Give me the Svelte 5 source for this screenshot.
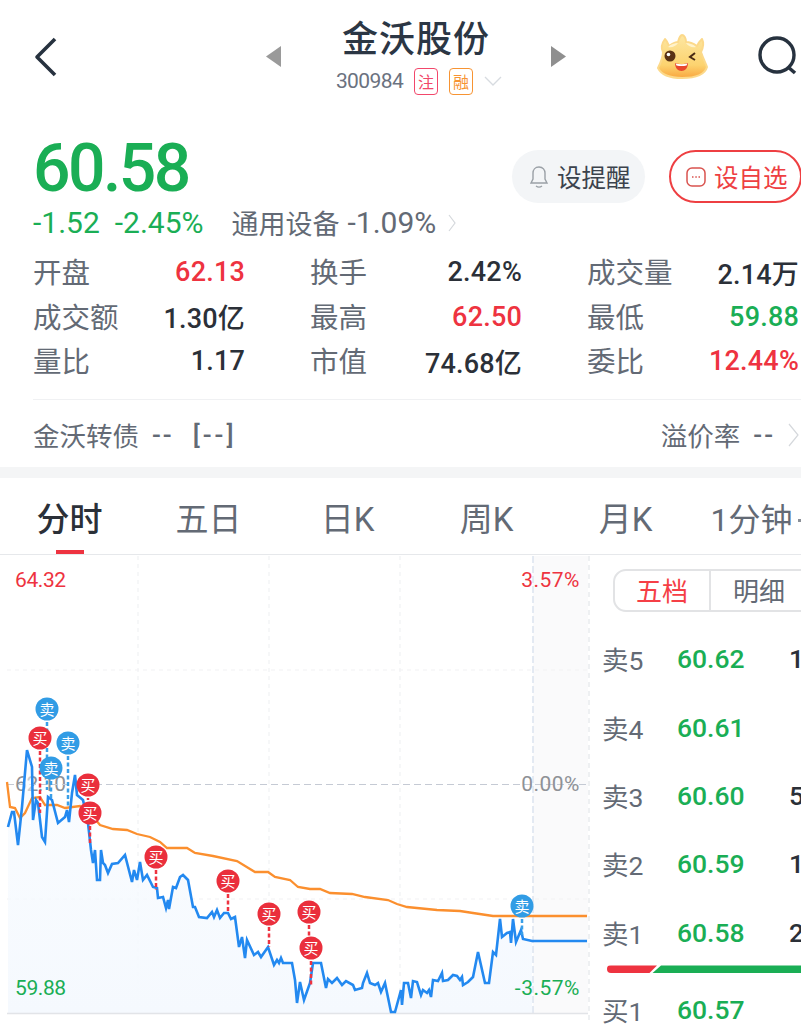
<script>
  const fmt = (p) => p.map((q) => q.join(',')).join(' ');
  const blue = [[8,827],[12,812],[14,812],[18,845],[22,807],[27,750],[32,767],[33,820],[36,800],[38,803],[42,837],[45,842],[48,797],[52,800],[58,823],[65,817],[67,810],[69,822],[72,793],[75,775],[77,795],[83,800],[88,823],[91,850],[93,863],[95,850],[97,880],[100,880],[101,850],[103,863],[105,865],[108,873],[112,864],[118,863],[125,855],[132,882],[134,870],[137,880],[140,862],[143,880],[147,875],[153,887],[157,888],[158,898],[163,897],[166,908],[168,900],[169,909],[173,887],[176,888],[180,877],[183,875],[188,880],[193,907],[195,907],[199,917],[207,918],[212,912],[214,917],[217,910],[220,918],[224,913],[228,913],[231,919],[235,917],[239,947],[242,937],[245,958],[247,940],[254,955],[258,952],[261,957],[268,947],[274,965],[277,960],[279,963],[281,958],[283,963],[292,963],[295,980],[297,1003],[300,982],[304,1000],[310,983],[313,963],[321,963],[326,988],[328,979],[332,983],[337,978],[342,985],[346,981],[353,985],[355,990],[362,988],[363,983],[367,973],[370,983],[375,985],[378,983],[381,992],[385,983],[391,1012],[395,1012],[401,990],[402,1005],[404,983],[408,983],[411,998],[413,981],[417,982],[421,995],[423,990],[427,993],[429,990],[431,997],[433,980],[438,981],[442,973],[443,981],[448,980],[453,975],[457,976],[460,980],[462,977],[463,985],[468,982],[473,977],[478,952],[485,983],[489,983],[493,952],[496,955],[500,919],[502,937],[507,933],[510,932],[511,943],[513,919],[516,942],[521,930],[523,939],[532,941],[587,941]];
  const orange = [[7,782],[10,807],[15,808],[20,818],[25,813],[32,798],[40,797],[45,805],[57,805],[65,808],[80,806],[90,813],[100,825],[113,829],[127,830],[137,834],[150,837],[160,842],[167,848],[187,848],[195,853],[213,856],[237,861],[255,872],[268,872],[275,877],[290,880],[298,887],[310,889],[320,889],[330,893],[352,894],[365,897],[388,900],[397,904],[407,907],[437,910],[460,911],[473,913],[493,916],[587,916]];
  const area = [...blue.filter((q) => q[0] <= 532), [532,1013], [8,1013]];
  const marks = [
    { x: 47, y: 709, k: '卖', to: 790 },
    { x: 68, y: 743, k: '卖', to: 806 },
    { x: 40, y: 738, k: '买', to: 813 },
    { x: 51, y: 768, k: '卖', to: 800 },
    { x: 88, y: 785, k: '买', to: 800 },
    { x: 90, y: 813, k: '买', to: 845 },
    { x: 156, y: 857, k: '买', to: 890 },
    { x: 228, y: 881, k: '买', to: 913 },
    { x: 269, y: 914, k: '买', to: 947 },
    { x: 309, y: 912, k: '买', to: 940 },
    { x: 311, y: 948, k: '买', to: 985 },
    { x: 522, y: 906, k: '卖', to: 935 },
  ];
  const stats = [
    [['开盘','62.13','red'],['换手','2.42%',''],['成交量','2.14万','']],
    [['成交额','1.30亿',''],['最高','62.50','red'],['最低','59.88','green']],
    [['量比','1.17',''],['市值','74.68亿',''],['委比','12.44%','red']],
  ];
  const tabs = ['分时','五日','日K','周K','月K','1分钟'];
  const book = [['卖5','60.62','1'],['卖4','60.61',''],['卖3','60.60','5'],['卖2','60.59','1'],['卖1','60.58','2']];
</script>

<div class="page">
  <header class="top">
    <svg class="back" viewBox="0 0 24 40" width="24" height="40"><path d="M22 2 4 20l18 18" fill="none" stroke="#27323f" stroke-width="3.6" stroke-linejoin="round"/></svg>
    <svg class="arrow arrow-l" viewBox="0 0 10 22" width="15" height="21" preserveAspectRatio="none"><path d="M10 0v22L0 11z" fill="#9a9a9a"/></svg>
    <div class="title">
      <div class="name">金沃股份</div>
      <div class="code"><span>300984</span><b class="tag pink">注</b><b class="tag orange">融</b>
        <svg viewBox="0 0 18 10" width="18" height="10"><path d="M1 1l8 8 8-8" fill="none" stroke="#d7dbe0" stroke-width="1.3"/></svg>
      </div>
    </div>
    <svg class="arrow" viewBox="0 0 10 22" width="15" height="21" preserveAspectRatio="none"><path d="M0 0v22L10 11z" fill="#8f8f8f"/></svg>
    <svg class="mascot" viewBox="0 0 54 48" width="54" height="48">
      <defs>
        <linearGradient id="skin" x1="0" y1="0" x2="0" y2="1"><stop offset="0" stop-color="#fde7a2"/><stop offset="0.7" stop-color="#fcd36f"/><stop offset="1" stop-color="#f9a63f"/></linearGradient>
      </defs>
      <path d="M9 7c2 2 3 5 4 7 3-2 7-4 9-4 1-4 3-7 4-7 2 0 4 3 4 7 4 0 8 2 11 4 1-3 3-5 5-7 2 4 1 9-1 13 2 6 4 10 6 15-2 7-10 11-25 11-14 0-21-4-24-10 3-6 5-10 5-16-2-4-1-9 2-13z" fill="url(#skin)" stroke="#fcd98a" stroke-width="2" stroke-linejoin="round"/>
      <path d="M12 15c3-3 7-4 10-4-2 3-6 5-10 4zM40 15c-3-3-7-4-10-4 2 3 6 5 10 4z" fill="#fff3cc"/>
      <circle cx="14" cy="24" r="5.500" fill="#5a3214"/><circle cx="12.500" cy="22.500" r="1.800" fill="#fff"/>
      <path d="M39 21l-5 4 5 3" fill="none" stroke="#4a2a14" stroke-width="2"/>
      <path d="M19 31c4 1.500 9 1.500 13 0 0 5-3 8-6.500 8S19 36 19 31z" fill="#e8482e"/>
      <path d="M19.500 31.500c4 1 8 1 12 0l-1 2c-3 .7-7 .7-10 0z" fill="#fff"/>
    </svg>
    <svg class="search" viewBox="0 0 44 44" width="44" height="44"><circle cx="20" cy="20" r="17" fill="none" stroke="#27323f" stroke-width="3.400"/><path d="M31 32l7 6" stroke="#27323f" stroke-width="3.600"/></svg>
  </header>

  <section class="quote">
    <div class="quote-main">
      <div class="price">60.58</div>
      <div class="delta"><span class="green">-1.52</span><span class="green">-2.45%</span><span class="sector">通用设备</span><span class="sector-v">-1.09%</span>
        <svg viewBox="0 0 8 18" width="8" height="18"><path d="M1 1l6 8-6 8" fill="none" stroke="#d5d8dc" stroke-width="1.200"/></svg>
      </div>
    </div>
    <div class="btns">
      <div class="btn remind">
        <svg viewBox="0 0 20 24" width="20" height="24"><path d="M10 2c-4 0-6 3-6 6v6l-2 4h16l-2-4V8c0-3-2-6-6-6zM7 21c2 1.500 4 1.500 6 0" fill="none" stroke="#9aa0a6" stroke-width="1.400"/></svg>设提醒
      </div>
      <div class="btn watch">
        <svg viewBox="0 0 20 20" width="20" height="20"><rect x="1" y="1" width="18" height="18" rx="5" fill="none" stroke="#d9534f" stroke-width="1.500"/><path d="M6 10h1.500M9.300 10h1.500M12.500 10h1.500" stroke="#d9534f" stroke-width="1.500"/></svg>设自选
      </div>
    </div>
  </section>

  <section class="stats">
    {#each stats as row}
      <div class="stat-row">
        {#each row as s}
          <div class="stat"><span class="label">{s[0]}</span><span class="value {s[2]}">{s[1]}</span></div>
        {/each}
      </div>
    {/each}
  </section>

  <div class="bond">
    <div class="bond-l"><span>金沃转债</span><span class="dash">--</span><span class="dash wide">[--]</span></div>
    <div class="bond-r"><span>溢价率</span><span class="dash">--</span>
      <svg viewBox="0 0 12 24" width="12" height="24"><path d="M1 1l9 11-9 11" fill="none" stroke="#d5d8dc" stroke-width="1.200"/></svg>
    </div>
  </div>

  <div class="band"></div>

  <nav class="tabs">
    {#each tabs as t, i}
      <div class="tab" class:on={i === 0}>{t}</div>
    {/each}
    <i class="more"></i>
  </nav>

  <section class="board">
    <div class="chart">
      <span class="axis grey ml">62.10</span>
      <svg class="plot" viewBox="0 555 590 469" width="590" height="469">
        <defs>
          <linearGradient id="fade" x1="0" y1="0" x2="0" y2="1"><stop offset="0" stop-color="#f5faff" stop-opacity="0.5"/><stop offset="1" stop-color="#f5f9fe"/></linearGradient>
        </defs>
        <rect x="533" y="556" width="55" height="457" fill="#fafafb"/>
        <g stroke="#f1f2f4" stroke-width="1.200" stroke-dasharray="4 4">
          <path d="M138 556V1013M269 556V1013M400 556V1013"/>
          <path d="M7 670H588M7 899H588"/>
        </g>
        <path d="M533 556V1013" stroke="#dce4ef" stroke-width="1.500" stroke-dasharray="7 3"/>
        <path d="M589 556V1024" stroke="#e9ebee" stroke-width="1.500" stroke-dasharray="5 4"/>
        <path d="M7 784.500H588" stroke="#c5cad4" stroke-width="1.200" stroke-dasharray="7 4"/>
        <polygon points={fmt(area)} fill="url(#fade)"/>
        <path d="M7 1013.500H588" stroke="#e2e4e8" stroke-width="1.500"/>
        <polyline points={fmt(orange)} fill="none" stroke="#fb8f2e" stroke-width="2.300"/>
        <polyline points={fmt(blue)} fill="none" stroke="#2389f0" stroke-width="2.600"/>
        {#each marks as m}
          <path d="M{m.x} {m.y}V{m.to}" stroke={m.k === '买' ? '#ee3340' : '#3a9fe8'} stroke-width="2.500" stroke-dasharray="4 2.500"/>
        {/each}
        {#each marks as m}
          <circle cx={m.x} cy={m.y} r="11.500" fill={m.k === '买' ? '#ea2f3c' : '#319ce5'}/>
          <text x={m.x} y={m.y + 5.500} class="mark">{m.k}</text>
        {/each}
      </svg>
      <span class="axis red tl">64.32</span>
      <span class="axis red tr">3.57%</span>
      <span class="axis grey mr">0.00%</span>
      <span class="axis green bl">59.88</span>
      <span class="axis green br">-3.57%</span>
    </div>
    <aside class="side">
      <div class="seg"><span class="seg-a">五档</span><span class="seg-b">明细</span></div>
      <div class="book">
        {#each book as b}
          <div class="level"><span class="lv">{b[0]}</span><span class="green lp">{b[1]}</span><span class="lq">{b[2]}</span></div>
        {/each}
      </div>
      <div class="ratio"><i class="r"></i><i class="g"></i></div>
      <div class="level"><span class="lv">买1</span><span class="green lp">60.57</span><span class="lq"></span></div>
    </aside>
  </section>
</div>

<style>
  :global(body) { margin: 0; background: #fff; }
  .page {
    width: 801px; height: 1024px; overflow: hidden; background: #fff;
    font-family: Roboto, "Noto Sans CJK SC", sans-serif; color: #2b3038;
  }
  .green { color: #1aae55; }
  .red { color: #ee3340; }

  .top { height: 112px; display: flex; align-items: flex-start; padding-left: 33px; box-sizing: border-box; }
  .back { margin-top: 37px; flex: none; }
  .top .arrow { flex: none; margin-top: 46px; }
  .arrow-l { margin-left: 209px; }
  .title { width: 270px; flex: none; display: flex; flex-direction: column; align-items: center; padding-top: 12px; box-sizing: border-box; }
  .name { font-size: 36px; line-height: 48px; color: #2b3644; font-family: "Noto Sans CJK SC", sans-serif; letter-spacing: 1px; font-weight: 500; }
  .code { display: flex; align-items: center; gap: 11px; font-size: 21px; color: #6b7280; margin-top: 6px; margin-left: 6px; height: 30px; }
  .code span { letter-spacing: -0.6px; }
  .tag { width: 24px; height: 27px; border-radius: 4px; border: 1.500px solid; font-size: 16px; line-height: 24px; text-align: center; font-weight: 400; font-family: "Noto Sans CJK SC", sans-serif; box-sizing: border-box; }
  .tag.pink { color: #f2476b; border-color: #f2476b; }
  .tag.orange { color: #f79433; border-color: #f79433; }
  .mascot { flex: none; margin-left: 90px; margin-top: 32px; }
  .search { flex: none; margin-left: 47px; margin-top: 35px; }

  .quote { display: flex; justify-content: space-between; padding-left: 33px; height: 132px; box-sizing: border-box; margin-top: 22px; }
  .price { font-size: 66px; line-height: 70px; color: #1aae55; font-weight: 500; letter-spacing: -2.500px; }
  .delta { display: flex; align-items: center; font-size: 30px; line-height: 36px; white-space: nowrap; margin-top: 1px; }
  .delta span:nth-child(2) { margin-left: 15px; }
  .delta .sector { color: #636a75; margin-left: 28px; font-size: 27px; font-family: "Noto Sans CJK SC", sans-serif; }
  .delta .sector-v { color: #636a75; margin-left: 8px; margin-right: 12px; }
  .btns { display: flex; gap: 24px; padding-top: 16px; margin-right: -1px; }
  .btn { height: 53px; border-radius: 27px; display: flex; align-items: center; box-sizing: border-box; font-size: 24.500px; font-family: "Noto Sans CJK SC", sans-serif; gap: 8px; }
  .remind { width: 133px; background: #f3f5f7; color: #3b424c; padding-left: 17px; }
  .watch { width: 133px; border: 2px solid #ee3f42; color: #ee3f42; padding-left: 15px; }

  .stats { padding: 0 0 0 33px; display: flex; flex-direction: column; margin-top: -16px; }
  .stat-row { display: grid; grid-template-columns: 212px 212px 212px; column-gap: 65px; height: 44.500px; align-items: center; }
  .stat { display: flex; justify-content: space-between; align-items: center; }
  .label { color: #636a75; font-size: 28.500px; font-family: "Noto Sans CJK SC", sans-serif; margin-bottom: 3px; }
  .value { font-weight: 500; font-size: 27px; letter-spacing: 0.200px; }
  .value.red { color: #ee3340; } .value.green { color: #1aae55; }

  .bond { margin: 15px 0 0 33px; border-top: 1px solid #f0f1f3; display: flex; justify-content: space-between; align-items: center; height: 68px; padding-top: 3px; box-sizing: border-box; font-size: 26.500px; color: #636a75; padding-right: 1px; font-family: "Noto Sans CJK SC", sans-serif; }
  .bond-l, .bond-r { display: flex; align-items: center; gap: 13px; }
  .bond .dash { font-family: Roboto, sans-serif; font-weight: 500; letter-spacing: 2px; font-size: 26px; }
  .bond .wide { margin-left: 6px; letter-spacing: 3px; }
  .band { height: 11px; background: #f4f5f6; }

  .tabs { height: 77px; display: flex; border-bottom: 1px solid #e6e8eb; box-sizing: border-box; padding-top: 22px; font-size: 33px; color: #636a75; white-space: nowrap; overflow: hidden; position: relative; }
  .tab { width: 139px; flex: none; line-height: 40px; position: relative; text-align: center; }
  .tab:last-of-type { width: 113px; font-size: 32px; }
  .tab.on { color: #2b3038; font-weight: 500; }
  .tab.on::after { content: ""; position: absolute; left: 56px; top: 50px; width: 28px; height: 5px; background: #ee3340; }
  .more { position: absolute; left: 798px; top: 41px; width: 3px; height: 3px; background: #8b9098; }

  .board { display: flex; height: 469px; }
  .chart { width: 590px; height: 469px; flex: none; position: relative; }
  .plot { display: block; position: relative; }
  .mark { font-size: 15px; fill: #fff; text-anchor: middle; font-family: "Noto Sans CJK SC", sans-serif; }
  .axis { position: absolute; font-size: 21px; line-height: 24px; }
  .grey { color: #8e9196; }
  .tl, .ml, .bl { letter-spacing: -0.400px; left: 15px; }
  .tr, .mr, .br { letter-spacing: 0.500px; right: 10px; }
  .tl, .tr { top: 13px; }
  .ml, .mr { top: 217px; }
  .bl, .br { top: 421px; }

  .side { flex: 1; min-width: 0; padding-left: 12px; overflow: hidden; }
  .seg { margin-top: 14px; margin-left: 11px; height: 43px; width: 210px; display: flex; box-sizing: border-box; border: 2px solid #e2e3e5; border-radius: 13px; font-size: 26px; font-family: "Noto Sans CJK SC", sans-serif; line-height: 38px; }
  .seg span { flex: none; text-align: center; }
  .seg-a { width: 94px; color: #f53f46; border-right: 2px solid #e2e3e5; }
  .seg-b { width: 96px; color: #636a75; }
  .book { margin-top: 13px; }
  .level { height: 68.400px; display: flex; align-items: center; font-size: 26.500px; white-space: nowrap; }
  .lv { width: 75px; color: #636a75; flex: none; }
  .lp { width: 112px; font-weight: 500; flex: none; }
  .lq { font-weight: 500; color: #2b3038; }
  .ratio { display: flex; height: 8px; margin: -1px 0 2px 5px; }
  .ratio .r { width: 50px; background: #ee3340; border-radius: 4px 0 0 4px; clip-path: polygon(0 0, 100% 0, 84% 100%, 0 100%); display: block; }
  .ratio .g { flex: 1; background: #1aae55; clip-path: polygon(9px 0, 100% 0, 100% 100%, 0 100%); display: block; margin-left: -5px; }
</style>
